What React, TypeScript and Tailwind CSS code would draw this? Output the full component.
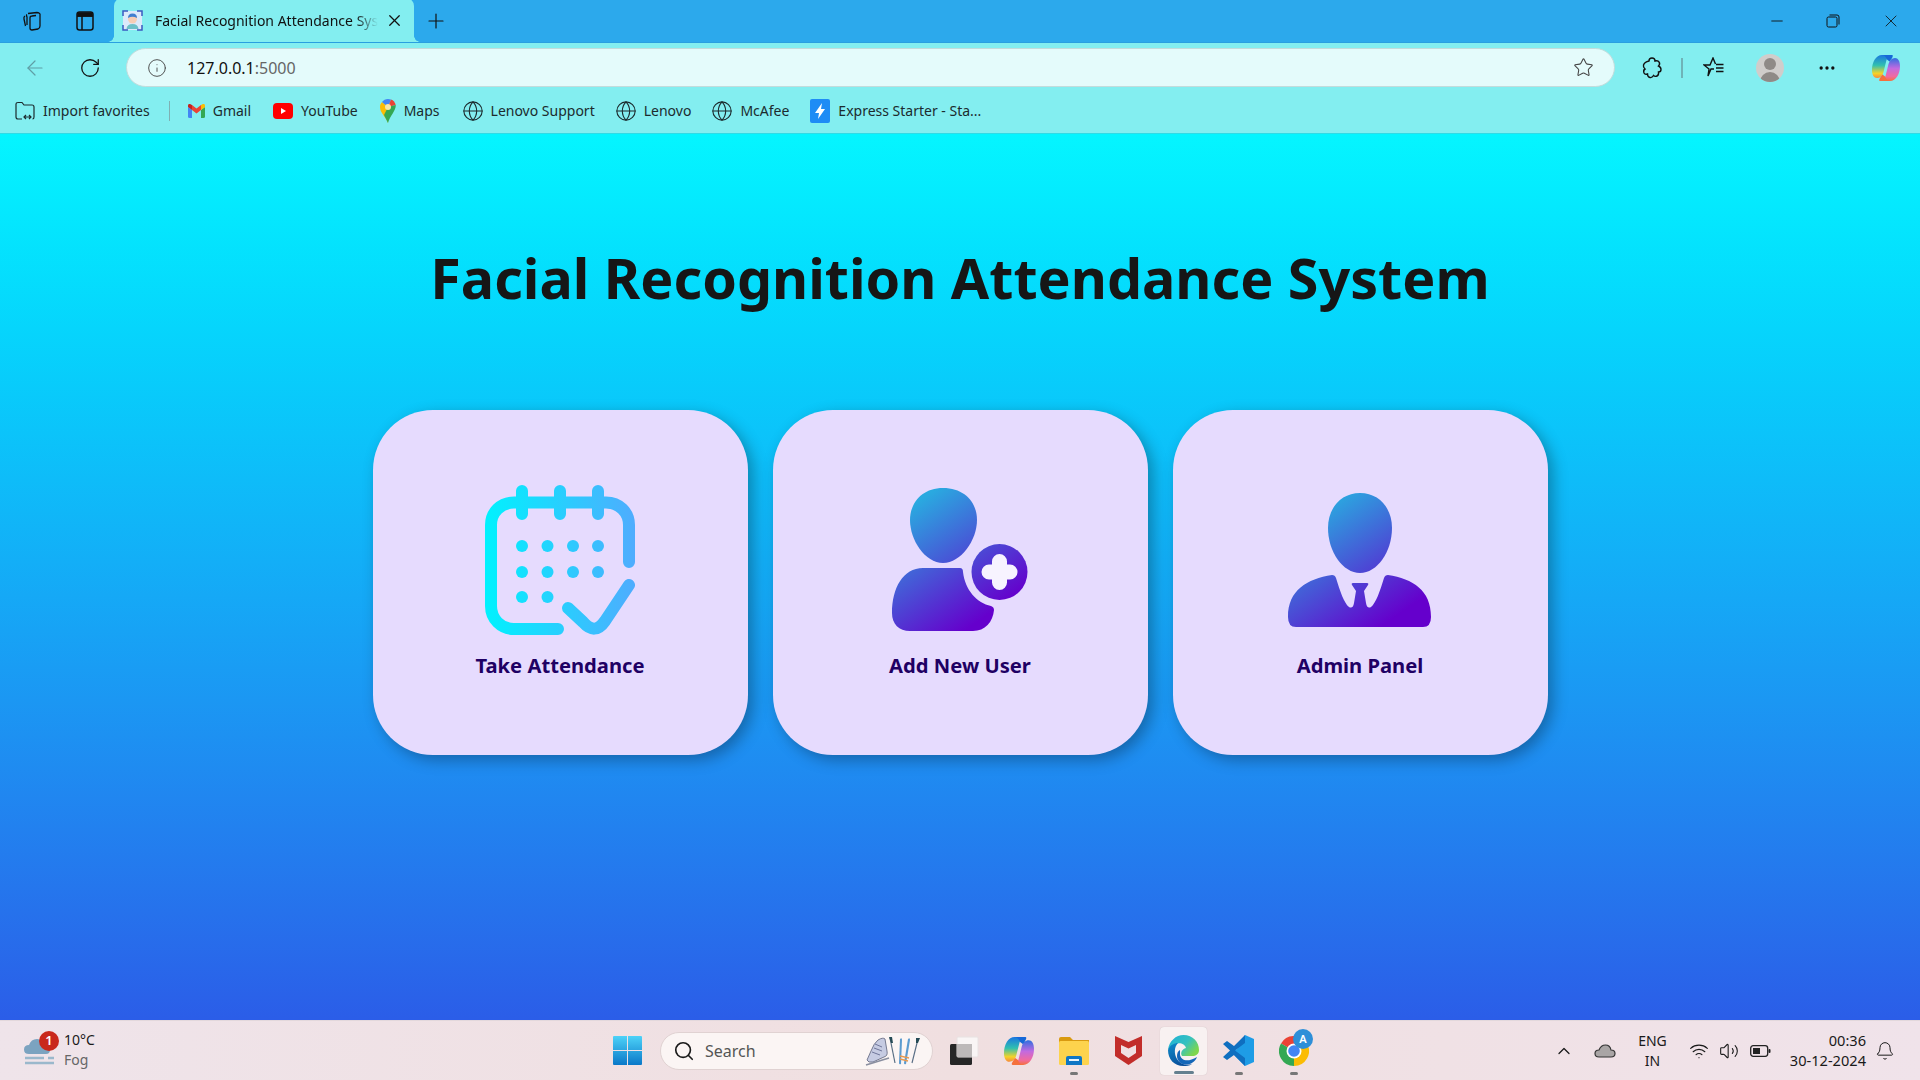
import { ArrowLeft, ChevronUp, Ellipsis, Globe, Info, Plus, RotateCw, Search, Star, Volume2, Wifi, X, Bell, Minus } from 'lucide-react'

const uiFont = "font-['Noto_Sans',sans-serif]"

function CalendarIcon() {
  return (
    <svg width="150" height="150" viewBox="0 0 150 150" fill="none">
      <defs>
        <linearGradient id="cal" gradientUnits="userSpaceOnUse" x1="0" y1="0" x2="150" y2="0">
          <stop offset="0" stopColor="#00f2fe" />
          <stop offset="1" stopColor="#4facfe" />
        </linearGradient>
      </defs>
      <g stroke="url(#cal)" strokeWidth="12" strokeLinecap="round" strokeLinejoin="round">
        <path d="M73 144H29C16 144 6 134 6 121V40C6 27 16 17.500 29 17.500H121C134 17.500 144 27 144 40V77" />
        <path d="M37 6V29M75 6V29M113 6V29" />
        <path d="M83 123L98 137C106 146 113 146 120 136L144 100" />
      </g>
      <g fill="url(#cal)">
        {[37, 62.5, 88, 113].map((x) => (
          <circle key={x} cx={x} cy="61" r="6" />
        ))}
        {[37, 62.5, 88, 113].map((x) => (
          <circle key={x} cx={x} cy="87" r="6" />
        ))}
        {[37, 62.5].map((x) => (
          <circle key={x} cx={x} cy="112" r="6" />
        ))}
      </g>
    </svg>
  )
}

function AddUserIcon() {
  return (
    <svg width="150" height="150" viewBox="0 0 150 150">
      <defs>
        <linearGradient id="usr" gradientUnits="userSpaceOnUse" x1="35" y1="15" x2="110" y2="125">
          <stop offset="0" stopColor="#2aa9e0" />
          <stop offset="1" stopColor="#6500cc" />
        </linearGradient>
      </defs>
      <g fill="url(#usr)">
        <path d="M58 3C80 3 92 18 92 35C92 55 76 78 58 78C40 78 25 55 25 35C25 18 37 3 58 3Z" />
        <path d="M38 83H75Q78 83 78 87C80 105 92 118 106 121Q109 122 109 125C108 137 100 146 88 146H25C14 146 7 139 7 128C7 103 18 83 38 83Z" />
        <circle cx="114.500" cy="87" r="28" />
      </g>
      <path d="M104 87H125M114.500 76.500V97.500" stroke="#f7f3ff" strokeWidth="15" strokeLinecap="round" />
    </svg>
  )
}

function AdminIcon() {
  return (
    <svg width="150" height="150" viewBox="0 0 150 150">
      <defs>
        <linearGradient id="adm" gradientUnits="userSpaceOnUse" x1="45" y1="15" x2="120" y2="125">
          <stop offset="0" stopColor="#2aa9e0" />
          <stop offset="1" stopColor="#6500cc" />
        </linearGradient>
      </defs>
      <g fill="url(#adm)">
        <path d="M75 8C94 8 107 23 107 43C107 67 92 88 75 88C58 88 43 67 43 43C43 23 56 8 75 8Z" />
        <path d="M47 90C22 94 3 105 3 132Q3 142 11 142H138Q146 142 146 132C146 105 128 94 103 90Q100 90 99 93C95 106 91 118 86 122Q82 124 81 118L79 106L83 100Q84 98 82 98H68Q66 98 67 100L71 106L69 118Q68 124 64 122C59 118 55 106 51 93Q50 90 47 90Z" />
      </g>
    </svg>
  )
}

function Card({ icon, label }: { icon: React.ReactNode; label: string }) {
  return (
    <div className="flex h-[345px] w-[375px] flex-col items-center rounded-[60px] bg-[#e6dbfe] pt-[75px] shadow-[5px_5px_15px_rgba(0,0,0,0.3)]">
      {icon}
      <span className="mt-[16px] font-['Noto_Sans',sans-serif] text-[20.200px] leading-7 font-bold text-[#1f0064]">
        {label}
      </span>
    </div>
  )
}

function Favicon() {
  return (
    <svg width="21" height="21" viewBox="0 0 21 21">
      <rect x="1" y="1" width="19" height="19" fill="#dbe9fb" />
      <path d="M1 6V1H6M15 1H20V6M20 15V20H15M6 20H1V15" stroke="#3b5bc0" strokeWidth="1.500" fill="none" />
      <circle cx="10.500" cy="9" r="4.500" fill="#f6cdb5" />
      <path d="M6 8Q6 3.500 10.500 3.500Q15 3.500 15 8Q10.500 5.500 6 8Z" fill="#3f7fd0" />
      <path d="M4.500 19Q5 14 10.500 14Q16 14 16.500 19Z" fill="#6cc0c8" />
    </svg>
  )
}

function Gmail() {
  return (
    <svg width="17" height="14" viewBox="0 0 17 14">
      <path d="M0 3V12.500Q0 14 1.500 14H4V6Z" fill="#4285f4" />
      <path d="M17 3V12.500Q17 14 15.500 14H13V6Z" fill="#34a853" />
      <path d="M13 1V6L17 3V1.500C17 0 15.500 -.5 14.500 .3Z" fill="#fbbc04" />
      <path d="M4 6V1L8.500 4.500L13 1V6L8.500 9.500Z" fill="#ea4335" />
      <path d="M0 3V1.500C0 0 1.500 -.5 2.500 .3L4 1V6Z" fill="#c5221f" />
    </svg>
  )
}

function YouTube() {
  return (
    <svg width="20" height="16" viewBox="0 0 20 16">
      <rect width="20" height="16" rx="4" fill="#f00" />
      <path d="M8 5L13 8L8 11Z" fill="#fff" />
    </svg>
  )
}

function MapsPin() {
  return (
    <svg width="16" height="24" viewBox="0 0 16 24">
      <path d="M8 24C6 18 0 14 0 8C0 6 .7 4.500 2 3L8 8Z" fill="#fbbc04" />
      <path d="M2 3C3.500 1 5.500 0 8 0C9 0 10 .2 11 .6L8 8Z" fill="#4285f4" />
      <path d="M11 .6C13.500 1.500 15 3.500 15.700 6L8 8Z" fill="#ea4335" />
      <path d="M15.700 6C16.500 11 10 17 8 24L4 16L8 8Z" fill="#34a853" />
      <circle cx="8" cy="8" r="3" fill="#f6e7a8" />
    </svg>
  )
}

function Bolt() {
  return (
    <svg width="20" height="24" viewBox="0 0 20 24">
      <rect width="20" height="24" rx="2" fill="#1e8cf5" />
      <path d="M12 4L5 14H9L8 20L15 10H11Z" fill="#fff" />
    </svg>
  )
}

function ImportFolder() {
  return (
    <svg width="20" height="20" viewBox="0 0 20 20" fill="none" stroke="#1c2b2e" strokeWidth="1.200">
      <path d="M7 18H3Q1 18 1 16V3Q1 1.500 3 1.500H7L9 4H17Q19 4 19 6V16Q19 18 17.500 18" />
      <path d="M9 16H16M11 14L9 16L11 18M14 14L16 16L14 18" />
    </svg>
  )
}

function CopilotLogo({ size }: { size: number }) {
  return (
    <svg width={size} height={size} viewBox="0 0 28 28">
      <defs>
        <linearGradient id={`cpa${size}`} x1="0" y1="0" x2="0" y2="1">
          <stop offset="0" stopColor="#1a76e0" />
          <stop offset="0.450" stopColor="#30c0b0" />
          <stop offset="0.800" stopColor="#f5d328" />
          <stop offset="1" stopColor="#f58a3c" />
        </linearGradient>
        <linearGradient id={`cpb${size}`} x1="0" y1="0" x2="0" y2="1">
          <stop offset="0" stopColor="#2f6fe0" />
          <stop offset="0.450" stopColor="#c26ae0" />
          <stop offset="0.800" stopColor="#f06aa0" />
          <stop offset="1" stopColor="#f5703c" />
        </linearGradient>
      </defs>
      <path d="M10 1H20C17 1 15.500 3 14.500 6L11.500 18C10.500 22 8 24 5 24C2 24 0 21 0 16C0 8 4 1 10 1Z" fill={`url(#cpa${size})`} />
      <path d="M18 27H8C11 27 12.500 25 13.500 22L16.500 10C17.500 6 20 4 23 4C26 4 28 7 28 12C28 20 24 27 18 27Z" fill={`url(#cpb${size})`} />
      <path d="M20 1H10C12.500 1 14 3 15 5.500L17.500 7.500C20 4.500 22 1 20 1Z" fill="#1668d8" />
      <path d="M8 27H18C15.500 27 14 25 13 22.500L10.500 20.500C8 23.500 6 27 8 27Z" fill="#f5703c" />
    </svg>
  )
}

function WinLogo() {
  return (
    <svg width="29" height="29" viewBox="0 0 29 29">
      <defs>
        <linearGradient id="win" x1="0" y1="0" x2="0" y2="1">
          <stop offset="0" stopColor="#4dd2f8" />
          <stop offset="1" stopColor="#0a78c8" />
        </linearGradient>
      </defs>
      <path d="M0 1Q0 0 1 0H14V14H0ZM15 0H28Q29 0 29 1V14H15ZM0 15H14V29H1Q0 29 0 28ZM15 15H29V28Q29 29 28 29H15Z" fill="url(#win)" />
    </svg>
  )
}

function TaskView() {
  return (
    <svg width="30" height="30" viewBox="0 0 30 30">
      <rect x="1" y="8" width="22" height="21" rx="1.500" fill="#262626" />
      <rect x="8" y="1" width="21" height="20" rx="1" fill="#f9f5f5" stroke="#e8e2e2" />
      <rect x="8" y="8" width="15" height="13" fill="#bdb9b9" />
    </svg>
  )
}

function Explorer() {
  return (
    <svg width="30" height="30" viewBox="0 0 30 30">
      <path d="M0 3Q0 1 2 1H11L14 4H30V8H0Z" fill="#d99a10" />
      <rect y="5" width="30" height="24" rx="1.500" fill="#fdd34d" />
      <path d="M7 29V22Q7 20 9 20H21Q23 20 23 22V29Z" fill="#0f76c4" />
      <rect x="10" y="23" width="10" height="2" fill="#e6f2fb" />
    </svg>
  )
}

function McAfee() {
  return (
    <svg width="27" height="29" viewBox="0 0 27 29">
      <path d="M0 0L13.500 6L27 0V20L13.500 29L0 20ZM6 9V17L13.500 22L21 17V9L13.500 12.500Z" fill="#c22d2a" fillRule="evenodd" />
    </svg>
  )
}

function Edge() {
  return (
    <svg width="31" height="31" viewBox="0 0 31 31">
      <defs>
        <linearGradient id="edg" x1="0" y1="0" x2="1" y2="0.600">
          <stop offset="0" stopColor="#1cb0d8" />
          <stop offset="0.600" stopColor="#35c1c0" />
          <stop offset="1" stopColor="#7dd64c" />
        </linearGradient>
        <linearGradient id="edb" x1="0" y1="0" x2="0.500" y2="1">
          <stop offset="0" stopColor="#0e8ccb" />
          <stop offset="1" stopColor="#0a4f9a" />
        </linearGradient>
      </defs>
      <path d="M15.500 0C25 0 31 7 31 15C31 19 28 21 24 21H14C12 18 14 14 18 13C17 9 12 7 7 9C2.500 11 1 14 0 15C1 6 8 0 15.500 0Z" fill="url(#edg)" />
      <path d="M0 15C2 10 6 8 10 8C6 12 6 19 9 24C12 29 18 31 24 29C21 31 18 31 15.500 31C6 31 0 24 0 15Z" fill="url(#edb)" />
      <path d="M12 20C13 25 19 28 29 22C27 27 22 30 17 29.500C12 29 9 25 9 21C9 18 10 16 12 15Z" fill="#1467b8" />
    </svg>
  )
}

function VSCode() {
  return (
    <svg width="31" height="31" viewBox="0 0 31 31">
      <path d="M22 0L31 4V27L22 31L8 17L14 14Z" fill="#1e9ce6" />
      <path d="M22 0V8L12 15.500L22 23V31L11 20L4 25L0 22L7 15.500L0 9L4 6L11 11Z" fill="#0f6fc0" />
    </svg>
  )
}

function ChromeLogo() {
  return (
    <div className="relative h-[30px] w-[30px]">
      <svg width="30" height="30" viewBox="0 0 30 30">
        <path d="M15 15L2 7.500A15 15 0 0 1 28 7.500Z" fill="#ea4335" />
        <path d="M15 15L28 7.500A15 15 0 0 1 15 30Z" fill="#fbbc04" />
        <path d="M15 15L15 30A15 15 0 0 1 2 7.500Z" fill="#34a853" />
        <circle cx="15" cy="15" r="7.500" fill="#fff" />
        <circle cx="15" cy="15" r="5.800" fill="#4285f4" />
      </svg>
      <span className={`absolute -top-[7px] -right-[4px] flex h-5 w-5 items-center justify-center rounded-full bg-[#2e8fd8] text-[11px] leading-none font-semibold text-white ${uiFont}`}>
        A
      </span>
    </div>
  )
}

function SkiArt() {
  return (
    <svg width="60" height="30" viewBox="0 0 60 30" fill="none">
      {/* skate */}
      <path d="M3 24L7 15Q10 7 14 4Q19 1 21 3L23 15Q24 20 20 21L9 26Q4 27 3 24Z" fill="#c6cbe2" stroke="#5a5f78" strokeWidth=".8" />
      <path d="M11 8L18 11M10 12L18 15M8 16L16 19" stroke="#70769a" strokeWidth="1" />
      <path d="M2 29L25 22" stroke="#8a8fa0" strokeWidth="1.600" />
      {/* poles and skis */}
      <path d="M26 2L31 27" stroke="#5a6f85" strokeWidth="1.200" />
      <path d="M25 1L28 1L29 7L27 7Z" fill="#244a55" />
      <path d="M36 3Q38 1 38 4L37 28Q35 29 35 27Z" fill="#5b9bd0" />
      <path d="M44 3Q46 1 46 4L42 28Q40 29 40 27Z" fill="#5b9bd0" />
      <path d="M36 20L45 22M36 23L44 25" stroke="#e89a50" strokeWidth="1.400" />
      <path d="M54 3L48 27" stroke="#5a6f85" strokeWidth="1.200" />
      <path d="M52 2L56 2L54 7L52 7Z" fill="#244a55" />
    </svg>
  )
}

function Dot({ wide }: { wide?: boolean }) {
  return <span className={`absolute -bottom-[9px] h-[3px] rounded-full ${wide ? 'w-5 bg-[#64808f]' : 'w-2 bg-[#777]'}`} />
}

function Bookmark({ icon, label, className }: { icon: React.ReactNode; label: string; className?: string }) {
  return (
    <div className={`flex items-center gap-2 ${className ?? ''}`}>
      {icon}
      <span className="whitespace-nowrap text-[#1c2b2e]">{label}</span>
    </div>
  )
}

export default function App() {
  const globe = <Globe size={22} strokeWidth={1.200} className="-mx-px text-[#1c2b2e]" />

  return (
    <div className={`flex h-screen w-full flex-col overflow-hidden ${uiFont}`}>
      {/* Tab strip */}
      <div className="flex h-[43px] shrink-0 items-end border-b border-[#2a9fe0] bg-[#2ca9ec] text-[#111]">
        <div className="flex h-full w-[114px] items-center pl-[22px]">
          <svg width="20" height="20" viewBox="0 0 20 20" fill="none" stroke="#111" strokeWidth="1.300">
            <path d="M6 2.500L15 1.500Q17 1.500 18 3V15Q18 17 16 18L10 19Q8 19 8 17V7Q8 5 10 5L14 4.500M3 5Q1.500 6 2 8L3.500 15M5 3.500Q4 4 5 6V14" />
          </svg>
          <svg className="ml-[34px]" width="18" height="20" viewBox="0 0 18 20" fill="none" stroke="#111" strokeWidth="1.500">
            <rect x="1" y="1" width="16" height="18" rx="2.500" />
            <path d="M1 5H17M6 5V19" />
            <path d="M2 2H16V5H2Z" fill="#111" />
          </svg>
        </div>
        <div className="relative flex h-[44px] w-[300px] items-center rounded-t-lg bg-[#83eef0] pl-2">
          <span className="absolute bottom-0 -left-[6px] h-[6px] w-[6px] bg-[radial-gradient(circle_at_0_0,#2ca9ec_5.500px,#83eef0_6px)]" />
          <span className="absolute -right-[6px] bottom-0 h-[6px] w-[6px] bg-[radial-gradient(circle_at_100%_0,#2ca9ec_5.500px,#83eef0_6px)]" />
          <Favicon />
          <span className="ml-3 w-[223px] overflow-hidden text-[14px] whitespace-nowrap [mask-image:linear-gradient(to_right,black_90%,transparent)]">
            Facial Recognition Attendance Sys
          </span>
          <X size={19} strokeWidth={1.600} className="ml-[7px]" />
        </div>
        <div className="flex h-full items-center pl-[10px]">
          <Plus size={24} strokeWidth={1.200} />
        </div>
        <div className="ml-auto flex h-full items-center gap-[40px] pr-[19px]">
          <Minus size={18} strokeWidth={1.200} />
          <svg width="14" height="14" viewBox="0 0 14 14" fill="none" stroke="#111" strokeWidth="1">
            <rect x="1" y="3" width="10" height="10" rx="1.500" />
            <path d="M3.500 1H11Q13 1 13 3V10.500" />
          </svg>
          <X size={20} strokeWidth={1} className="ml-[1px]" />
        </div>
      </div>

      {/* Toolbar */}
      <div className="flex h-[45px] shrink-0 items-center bg-[#83eef0] pt-[4px] text-[#111]">
        <ArrowLeft size={24} strokeWidth={1.200} className="ml-[23px] text-[#5f9ea5]" />
        <RotateCw size={22} strokeWidth={1.400} className="ml-[32px]" />
        <div className="ml-[25px] flex h-[39px] w-[1489px] shrink-0 items-center rounded-full border border-[#c3dcdc] bg-[#e4fbfb] pr-[20px] pl-[20px]">
          <Info size={20} strokeWidth={1.100} className="text-[#444]" />
          <span className="ml-[20px] text-[16px]">
            127.0.0.1<span className="text-[#666]">:5000</span>
          </span>
          <Star size={21} strokeWidth={1.200} className="ml-auto text-[#444]" />
        </div>
        <svg className="ml-[27px]" width="20" height="22" viewBox="0 0 20 22" fill="none" stroke="#111" strokeWidth="1.400">
          <path d="M7 4Q7 1 10 1Q13 1 13 4Q16 3 17 5Q18.500 7 16.500 9Q19 10 19 12.500Q19 15 16.500 15Q17 18 15 19Q13 20 11.500 18.500Q10 21 8 20.500Q5.500 20 5.500 17Q3 18 2 16Q1 13 3 12Q1 10 1.500 8Q2.500 5 7 4Z" />
        </svg>
        <span className="ml-[19px] h-5 w-[2px] bg-[#6fb3b8]" />
        <svg className="ml-[20px]" width="21" height="21" viewBox="0 0 21 21" fill="none" stroke="#111" strokeWidth="1.400">
          <path d="M11 12H8L5 19L6 12L1 8H7L10 1L12.500 7" />
          <path d="M13 7.500H20.500M13 11H20.500M13 14.500H20.500" />
        </svg>
        <div className="relative ml-[32px] h-7 w-7 overflow-hidden rounded-full bg-[#d0cdcb]">
          <span className="absolute top-[4px] left-[8px] h-3 w-3 rounded-full bg-[#8f8a87]" />
          <span className="absolute top-[18px] left-[4px] h-5 w-5 rounded-full bg-[#8f8a87]" />
        </div>
        <Ellipsis size={20} strokeWidth={2} className="ml-[33px]" />
        <div className="ml-[35px]">
          <CopilotLogo size={28} />
        </div>
      </div>

      {/* Bookmarks */}
      <div className="flex h-[46px] shrink-0 items-center border-b border-[#2fdbe6] bg-[#83eef0] pl-[15px] text-[14px]">
        <Bookmark icon={<ImportFolder />} label="Import favorites" />
        <span className="ml-[19px] h-5 w-px bg-[#7fb0b3]" />
        <Bookmark icon={<Gmail />} label="Gmail" className="ml-[18px]" />
        <Bookmark icon={<YouTube />} label="YouTube" className="ml-[22px]" />
        <Bookmark icon={<MapsPin />} label="Maps" className="ml-[22px]" />
        <Bookmark icon={globe} label="Lenovo Support" className="ml-[23px]" />
        <Bookmark icon={globe} label="Lenovo" className="ml-[21px]" />
        <Bookmark icon={globe} label="McAfee" className="ml-[21px]" />
        <Bookmark icon={<Bolt />} label="Express Starter - Sta..." className="ml-[21px]" />
      </div>

      {/* Page */}
      <main className="flex flex-1 flex-col items-center bg-gradient-to-b from-[#05f5ff] to-[#2b5de8] pt-[108px]">
        <h1 className="font-['Noto_Sans',sans-serif] text-[55.600px] leading-[72px] font-bold text-[#161616]">
          Facial Recognition Attendance System
        </h1>
        <div className="mt-[96px] flex gap-[25px]">
          <Card icon={<CalendarIcon />} label="Take Attendance" />
          <Card icon={<AddUserIcon />} label="Add New User" />
          <Card icon={<AdminIcon />} label="Admin Panel" />
        </div>
      </main>

      {/* Taskbar */}
      <div className="grid h-[60px] shrink-0 grid-cols-[1fr_auto_1fr] items-center border-t border-[#e3d8dc] bg-gradient-to-r from-[#efe4ea] via-[#f0dfe0] to-[#f0e3ea] text-[14px] text-[#1a1a1a]">
        <div className="flex items-center pl-[24px]">
          <div className="relative h-[30px] w-[32px]">
            <svg width="32" height="30" viewBox="0 0 32 30">
              <path d="M5 18Q0 18 0 13.500Q0 9 5 9Q7 3 13 3Q19 3 21 9Q26 9 26 13.500Q26 18 22 18Z" fill="#7ba3c0" />
              <path d="M1 22H20M24 22H30M1 27H30" stroke="#9ab8cc" strokeWidth="2.500" />
            </svg>
            <span className="absolute -top-[5px] left-[15px] flex h-5 w-5 items-center justify-center rounded-full bg-[#c9281c] text-[13px] leading-none font-semibold text-white">
              1
            </span>
          </div>
          <div className="ml-[8px] flex -translate-y-px flex-col text-[14px] leading-[20px]">
            <span>10°C</span>
            <span className="text-[#666]">Fog</span>
          </div>
        </div>

        <div className="ml-[2px] flex items-center">
          <WinLogo />
          <div className="ml-[18px] flex h-[38px] w-[273px] items-center rounded-full border border-[#e0d2d2] bg-[#fbf5f4] pr-[8px] pl-[12px]">
            <Search size={22} strokeWidth={1.800} />
            <span className="ml-[10px] text-[16px] text-[#555]">Search</span>
            <div className="ml-auto">
              <SkiArt />
            </div>
          </div>
          <div className="ml-[16px]">
            <TaskView />
          </div>
          <div className="ml-[25px]">
            <CopilotLogo size={30} />
          </div>
          <div className="relative ml-[25px] flex justify-center">
            <Explorer />
            <Dot />
          </div>
          <div className="ml-[26px]">
            <McAfee />
          </div>
          <div className="relative ml-[18px] flex h-[48px] w-[47px] items-center justify-center rounded-[4px] bg-[#f8f1f1] shadow-[0_0_1px_rgba(0,0,0,0.2)]">
            <Edge />
            <span className="absolute bottom-[1px] h-[3px] w-5 rounded-full bg-[#64808f]" />
          </div>
          <div className="relative ml-[16px] flex justify-center">
            <VSCode />
            <Dot />
          </div>
          <div className="relative ml-[25px] flex justify-center">
            <ChromeLogo />
            <Dot />
          </div>
        </div>

        <div className="flex items-center justify-end pr-[25px]">
          <ChevronUp size={20} strokeWidth={1.500} />
          <svg className="ml-[20px]" width="22" height="14" viewBox="0 0 22 14">
            <path d="M5 13Q1 13 1 9.500Q1 6 5 6Q7 1 11.500 1Q16 1 17 6Q21 6 21 9.500Q21 13 17 13Z" fill="#a9a5a5" stroke="#333" strokeWidth="1.200" />
          </svg>
          <div className="ml-[22px] flex flex-col items-center text-[14px] leading-[20px]">
            <span>ENG</span>
            <span>IN</span>
          </div>
          <Wifi size={20} strokeWidth={1.400} className="ml-[22px]" />
          <Volume2 size={20} strokeWidth={1.300} className="ml-[10px]" />
          <svg className="ml-[11px]" width="21" height="14" viewBox="0 0 21 14">
            <rect x=".7" y="1.700" width="17" height="10.600" rx="2.500" fill="none" stroke="#222" strokeWidth="1.300" />
            <rect x="3" y="4" width="7" height="6" fill="#222" />
            <rect x="18.500" y="5" width="2" height="4" rx="1" fill="#222" />
          </svg>
          <div className="ml-[19px] flex -translate-y-px flex-col items-end text-[14.600px] leading-[20px]">
            <span>00:36</span>
            <span>30-12-2024</span>
          </div>
          <Bell size={20} strokeWidth={1.200} className="ml-[9px]" />
        </div>
      </div>
    </div>
  )
}
